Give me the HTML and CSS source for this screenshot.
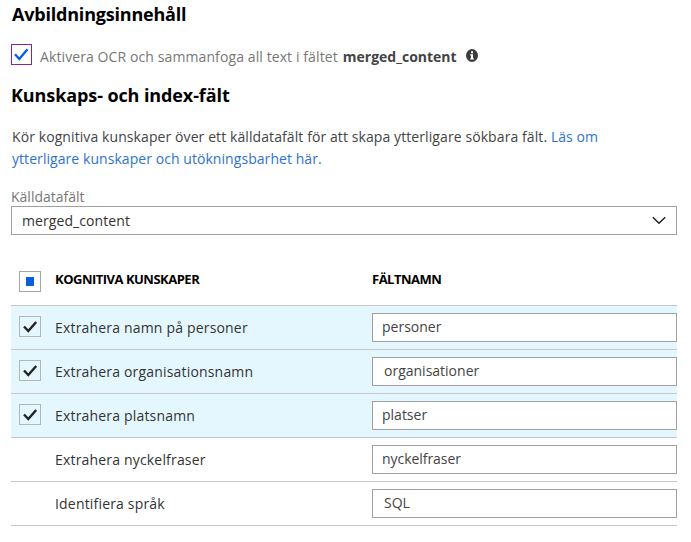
FILE: index.html
```html
<!DOCTYPE html>
<html lang="sv">
<head>
<meta charset="utf-8">
<title>Kognitiva kunskaper</title>
<link rel="stylesheet" href="styles.css">
</head>
<body>
<main class="panel">
  <h2 class="heading heading-image">Avbildningsinnehåll</h2>
  <div class="ocr">
    <span class="check check-ocr"><svg width="19" height="19" viewBox="0 0 19 19"><path d="M3 9.3 7.3 14 15.5 4.3"/></svg></span>
    <span class="ocr-text">Aktivera OCR och sammanfoga all text i fältet</span>
    <b class="ocr-field">merged_content</b>
    <svg class="info" width="12" height="13" viewBox="0 0 12 13"><ellipse cx="6" cy="6.5" rx="6" ry="6.5" fill="#3c3c3c"/><path d="M5 2.3h2v2H5zM4.2 5.3H7v4h.9v1.2H4.2V9.3H5V6.5h-.8z" fill="#fff"/></svg>
  </div>
  <h2 class="heading heading-fields">Kunskaps- och index-fält</h2>
  <p class="intro">Kör kognitiva kunskaper över ett källdatafält för att skapa ytterligare sökbara fält. <a class="link">Läs om<br>ytterligare kunskaper och utökningsbarhet här.</a></p>
  <div class="label">Källdatafält</div>
  <div class="select"><span>merged_content</span><svg width="14" height="9" viewBox="0 0 14 9"><path d="M.8 1.2 7 7.2 13.2 1.2"/></svg></div>
  <div class="table">
    <div class="row head">
      <span class="check check-all"><i></i></span>
      <span class="th">KOGNITIVA KUNSKAPER</span>
      <span class="th">FÄLTNAMN</span>
    </div>
    <div class="row selected">
      <span class="check"><svg width="20" height="19" viewBox="0 0 20 19"><path d="M4 9.5 8.3 14 16.2 5"/></svg></span>
      <span class="name">Extrahera namn på personer</span>
      <div class="field">personer</div>
    </div>
    <div class="row selected">
      <span class="check"><svg width="20" height="19" viewBox="0 0 20 19"><path d="M4 9.5 8.3 14 16.2 5"/></svg></span>
      <span class="name">Extrahera organisationsnamn</span>
      <div class="field field-in">organisationer</div>
    </div>
    <div class="row selected">
      <span class="check"><svg width="20" height="19" viewBox="0 0 20 19"><path d="M4 9.5 8.3 14 16.2 5"/></svg></span>
      <span class="name">Extrahera platsnamn</span>
      <div class="field">platser</div>
    </div>
    <div class="row">
      <span></span>
      <span class="name">Extrahera nyckelfraser</span>
      <div class="field field-tight">nyckelfraser</div>
    </div>
    <div class="row">
      <span></span>
      <span class="name">Identifiera språk</span>
      <div class="field field-in">SQL</div>
    </div>
  </div>
</main>
</body>
</html>
```
FILE: styles.css
```css
* { box-sizing: border-box; }
body {
  margin: 0;
  background: #fff;
  color: #333;
  font: 14px/22px "Open Sans", "Noto Sans", sans-serif;
  white-space: nowrap;
}
.panel { width: 677px; padding: 2px 0 0 11px; }
.heading { margin: 0; color: #000; font-size: 18px; font-weight: 700; line-height: 24px; letter-spacing: -.2px; }
.heading-image { padding-left: 1px; }
.ocr { display: flex; height: 21px; margin-top: 18px; color: #777; }
.check { width: 22px; height: 21px; border: 1px solid #b5b5b5; }
.check svg { display: block; fill: none; stroke: #222; stroke-width: 2.4; }
.check-ocr { width: 21px; border-color: #8a22a8; }
.check-ocr svg { stroke: #0b5fdc; }
.ocr-text { margin: 2px 0 0 8px; letter-spacing: .1px; }
.ocr-field { margin: 2px 0 0 5px; color: #444; font-weight: 700; }
.info { margin: 5px 0 0 9.5px; }
.heading-fields { margin-top: 18px; letter-spacing: -.1px; }
.intro { margin: 19px 0 0; padding-left: 1px; color: #444; letter-spacing: .09px; }
.link { color: #2d72d2; letter-spacing: .06px; }
.label { margin-top: 16px; color: #777; }
.select {
  display: flex; align-items: center; justify-content: space-between;
  height: 29px; margin-top: -2px; padding: 0 10px;
  border: 1px solid #a0a0a0;
  letter-spacing: .08px;
}
.select svg { fill: none; stroke: #222; stroke-width: 1.5; }
.table { margin-top: 26px; }
.row {
  display: grid; grid-template-columns: 36px 317px 305px;
  height: 44px; padding: 7px 0 0 8px;
  border-bottom: 1px solid #c8c8c8;
}
.row .check { margin-top: 3px; }
.selected { background: #e4f7fe; }
.head { height: 45px; color: #000; }
.check-all { display: flex; align-items: center; justify-content: center; border-color: #a5a5a5; }
.check-all i { width: 8px; height: 9px; background: #0b5fdc; }
.th { font-size: 13px; font-weight: 700; letter-spacing: -.5px; }
.name { padding-top: 4px; letter-spacing: .18px; }
.field {
  height: 29px; padding: 2px 0 0 9px;
  border: 1px solid #a0a0a0; background: #fff; color: #444;
}
.field-in { padding-left: 11px; }
.field-tight { letter-spacing: -.05px; }
```
